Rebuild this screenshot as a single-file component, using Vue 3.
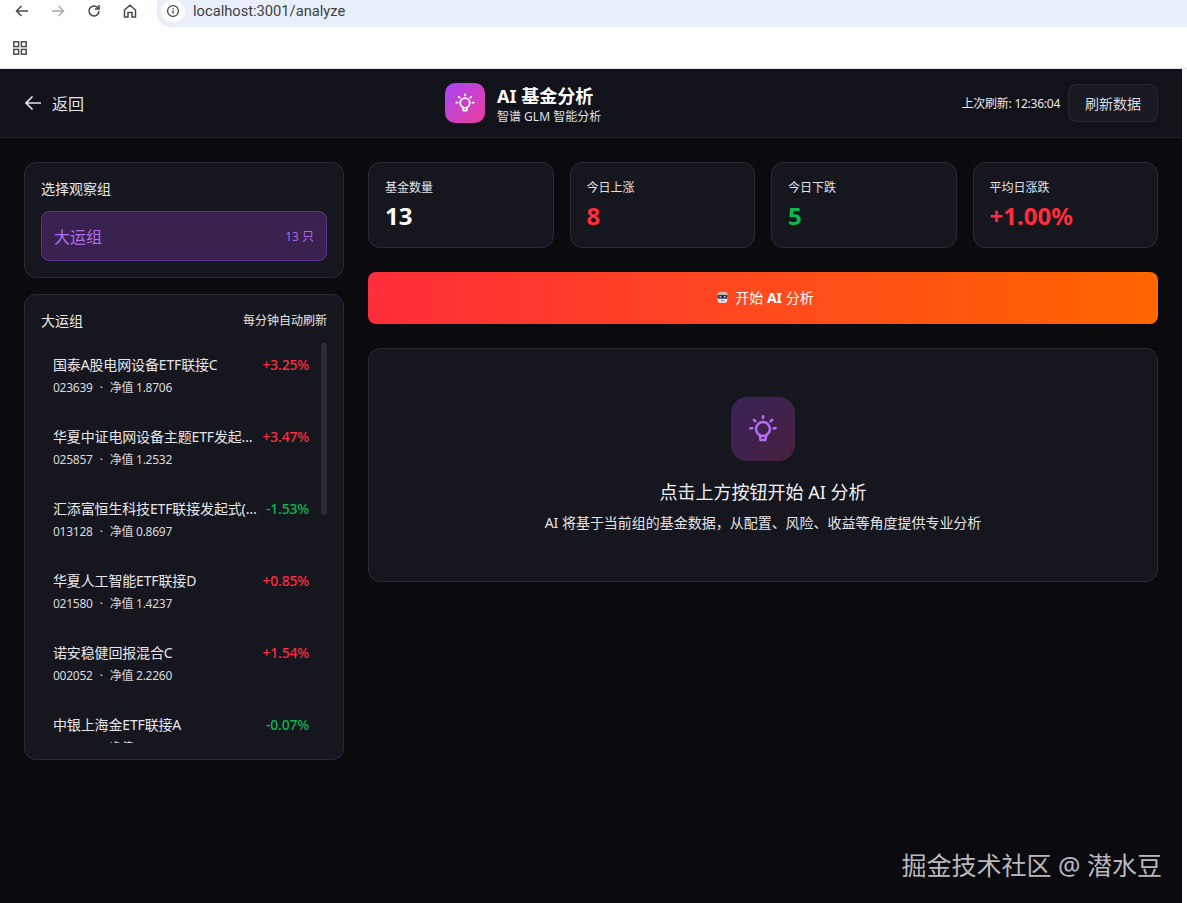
<script setup>
const stats = [
  { label: '基金数量', value: '13', tone: 'white' },
  { label: '今日上涨', value: '8', tone: 'up' },
  { label: '今日下跌', value: '5', tone: 'down' },
  { label: '平均日涨跌', value: '+1.00%', tone: 'up' },
]
const funds = [
  { name: '国泰A股电网设备ETF联接C', code: '023639', nav: '1.8706', pct: '+3.25%', tone: 'up' },
  { name: '华夏中证电网设备主题ETF发起式联接C', code: '025857', nav: '1.2532', pct: '+3.47%', tone: 'up' },
  { name: '汇添富恒生科技ETF联接发起式(QDII)C', code: '013128', nav: '0.8697', pct: '-1.53%', tone: 'down' },
  { name: '华夏人工智能ETF联接D', code: '021580', nav: '1.4237', pct: '+0.85%', tone: 'up' },
  { name: '诺安稳健回报混合C', code: '002052', nav: '2.2260', pct: '+1.54%', tone: 'up' },
  { name: '中银上海金ETF联接A', code: '000000', nav: '1.0000', pct: '-0.07%', tone: 'down' },
]
</script>

<template>
  <div class="page">
    <div class="toolbar">
      <svg class="tb-icon" viewBox="0 0 16 16"><path d="M14 8H2.500M7.500 3 2.500 8l5 5" /></svg>
      <svg class="tb-icon dim" viewBox="0 0 16 16"><path d="M2 8h11.500M8.500 3l5 5-5 5" /></svg>
      <svg class="tb-icon" viewBox="0 0 16 16"><path d="M13 8a5 5 0 1 1-1.500-3.600L13 6M13 2v4H9" /></svg>
      <svg class="tb-icon" viewBox="0 0 16 16"><path d="M2.500 7 8 2.200 13.500 7v7H10V9.500H6V14H2.500Z" /></svg>
      <div class="url">
        <span class="info">
          <svg viewBox="0 0 16 16" width="14" height="14"><circle cx="8" cy="8" r="6.200" /><path d="M8 7.200v4M8 4.500v1.400" /></svg>
        </span>
        <span class="url-text">localhost:3001/analyze</span>
      </div>
    </div>
    <div class="bookmarks">
      <svg viewBox="0 0 14 14" width="14" height="14" class="apps">
        <rect x="0.800" y="0.800" width="4.800" height="4.800" /><rect x="8.400" y="0.800" width="4.800" height="4.800" />
        <rect x="0.800" y="8.400" width="4.800" height="4.800" /><rect x="8.400" y="8.400" width="4.800" height="4.800" />
      </svg>
    </div>

    <div class="app">
      <header class="header">
        <div class="back">
          <svg viewBox="0 0 18 18" width="18" height="18"><path d="M17 9H2M8.500 2.500 2 9l6.500 6.500" /></svg>
          <span>返回</span>
        </div>
        <div class="brand">
          <div class="logo">
            <svg viewBox="0 0 24 24" width="22" height="22"><use href="#bulb" /></svg>
          </div>
          <div class="brand-text">
            <div class="brand-title">AI 基金分析</div>
            <div class="brand-sub">智谱 GLM 智能分析</div>
          </div>
        </div>
        <div class="refresh">
          <span class="refresh-time">上次刷新: 12:36:04</span>
          <button class="refresh-btn">刷新数据</button>
        </div>
      </header>

      <svg width="0" height="0" class="defs">
        <symbol id="bulb" viewBox="0 0 24 24">
          <g fill="none" stroke="currentColor" stroke-width="1.900" stroke-linecap="round" stroke-linejoin="round">
            <path d="M12 2.500v1.200M5.200 5.200l1 1M18.800 5.200l-1 1M2.500 11.500h1.500M20 11.500h1.500" />
            <circle cx="12" cy="12" r="5.200" />
            <path d="M9.600 16.800l.6 3.400h3.600l.6-3.400" />
          </g>
        </symbol>
      </svg>

      <main class="content">
        <aside class="side">
          <section class="card picker">
            <div class="card-title">选择观察组</div>
            <div class="group">
              <span class="group-name">大运组</span>
              <span class="group-count">13 只</span>
            </div>
          </section>
          <section class="card list-card">
            <div class="list-head">
              <span>大运组</span>
              <span class="auto">每分钟自动刷新</span>
            </div>
            <div class="list">
              <div v-for="f in funds" :key="f.name" class="row">
                <div class="row-top">
                  <span class="fund-name">{{ f.name }}</span>
                  <span class="pct" :class="f.tone">{{ f.pct }}</span>
                </div>
                <div class="row-sub">{{ f.code }}<span class="dot">·</span>净值 {{ f.nav }}</div>
              </div>
              <div class="thumb"></div>
            </div>
          </section>
        </aside>

        <div class="main">
          <div class="stats">
            <div v-for="s in stats" :key="s.label" class="card stat">
              <div class="stat-label">{{ s.label }}</div>
              <div class="stat-value" :class="s.tone">{{ s.value }}</div>
            </div>
          </div>
          <button class="start">
            <svg viewBox="0 0 12 12" width="13" height="13">
              <rect x="1.500" y="1" width="9" height="10" rx="3" fill="#e9dfe8" />
              <path d="M2.500 2.800C3.500.9 8.500.9 9.500 2.800Z" fill="#f0a050" />
              <rect x="1.500" y="3.500" width="9" height="3.600" rx="1.200" fill="#2f3350" />
              <circle cx="4" cy="5.300" r=".8" fill="#cfd6f5" />
              <circle cx="8" cy="5.300" r=".8" fill="#cfd6f5" />
              <rect x="5" y="8.500" width="2" height=".9" fill="#6b5a70" />
            </svg>
            <span>开始 <b>AI</b> 分析</span>
          </button>
          <div class="card empty">
            <div class="empty-icon">
              <svg viewBox="0 0 24 24" width="32" height="32"><use href="#bulb" /></svg>
            </div>
            <div class="empty-title">点击上方按钮开始 AI 分析</div>
            <div class="empty-sub">AI 将基于当前组的基金数据，从配置、风险、收益等角度提供专业分析</div>
          </div>
        </div>
      </main>

      <div class="watermark">掘金技术社区 @ 潜水豆</div>
    </div>
  </div>
</template>

<style>
html, body { margin: 0; background: #fff; }
</style>

<style scoped>
* { box-sizing: border-box; }
.page {
  width: 1187px;
  height: 903px;
  overflow: hidden;
  background: #fff;
  font-family: "Noto Sans", "Noto Sans CJK SC", sans-serif;
}
.toolbar {
  height: 27px;
  display: flex;
  align-items: flex-start;
  padding-left: 14px;
  gap: 20px;
}
.tb-icon {
  width: 16px;
  height: 16px;
  margin-top: 3px;
  fill: none;
  stroke: #45484d;
  stroke-width: 1.500;
  flex: none;
}
.tb-icon.dim { stroke: #a9acb1; }
.url {
  margin-left: -1px;
  flex: 1;
  height: 27px;
  background: #e9eff8;
  border-bottom-left-radius: 14px;
  display: flex;
  align-items: center;
  padding: 0 0 5px 4px;
}
.info {
  width: 24px;
  height: 22px;
  border-radius: 50%;
  background: #fff;
  display: flex;
  align-items: center;
  justify-content: center;
}
.info svg { fill: none; stroke: #3c3f44; stroke-width: 1.400; }
.url-text {
  margin-left: 8px;
  font-family: Roboto, sans-serif;
  font-size: 14.700px;
  color: #3c4043;
}
.bookmarks {
  height: 42px;
  display: flex;
  align-items: center;
  padding-left: 13px;
  border-bottom: 1px solid #dcdfe4;
}
.apps { fill: none; stroke: #4a4d52; stroke-width: 1.500; }
.app {
  position: relative;
  width: 1182px;
  height: 834px;
  background: #0a0a0f;
  color: #e9e9ee;
}
.defs { position: absolute; }
.header {
  height: 69px;
  display: flex;
  align-items: center;
  padding: 0 24px;
  background: #11121a;
  border-bottom: 1px solid #24252d;
}
.back {
  display: flex;
  align-items: center;
  gap: 10px;
  font-size: 16px;
  color: #e4e4ea;
  flex: none;
  width: 421px;
}
.back svg { fill: none; stroke: #e4e4ea; stroke-width: 1.700; }
.brand { display: flex; align-items: center; gap: 12px; }
.logo {
  width: 40px;
  height: 40px;
  border-radius: 10px;
  background: linear-gradient(135deg, #a845f7, #ec3c9a);
  display: flex;
  align-items: center;
  justify-content: center;
  color: #fff;
}
.brand-text { padding-top: 3px; }
.brand-title { font-size: 18px; font-weight: 700; line-height: 24px; color: #fff; }
.brand-sub { margin-top: 1px; font-size: 12px; line-height: 16px; color: #e0e0e6; }
.refresh { margin-left: auto; display: flex; align-items: center; gap: 8px; }
.refresh-time { font-size: 12px; color: #eaeaef; letter-spacing: -0.250px; }
.refresh-btn {
  height: 38px;
  width: 90px;
  border-radius: 8px;
  border: 1px solid #26272f;
  background: #191a23;
  color: #d8d8de;
  font: inherit;
  font-size: 14px;
  padding: 0;
}
.content {
  display: flex;
  gap: 24px;
  padding: 24px 24px 0;
}
.card {
  background: #15161e;
  border: 1px solid #2a2b34;
  border-radius: 12px;
}
.side { width: 320px; flex: none; display: flex; flex-direction: column; gap: 16px; }
.picker { padding: 16px; }
.card-title { font-size: 14px; line-height: 20px; color: #e6e6ea; margin-bottom: 12px; }
.group {
  height: 50px;
  border: 1px solid #5b3488;
  border-radius: 8px;
  background: #39224f;
  display: flex;
  align-items: center;
  justify-content: space-between;
  padding: 0 12px;
}
.group-name { font-size: 16px; color: #b26eea; }
.group-count { font-size: 12px; color: #a866e6; }
.list-card { padding: 16px; height: 466px; }
.list-head {
  display: flex;
  justify-content: space-between;
  align-items: center;
  font-size: 14px;
  line-height: 20px;
  color: #e6e6ea;
  margin-bottom: 12px;
}
.auto { font-size: 12px; }
.list {
  position: relative;
  height: 400px;
  overflow: hidden;
  display: flex;
  flex-direction: column;
  gap: 4px;
}
.row { flex: none; height: 68px; width: 280px; padding: 12px; }
.row-top { display: flex; align-items: center; justify-content: space-between; gap: 4px; line-height: 20px; }
.fund-name {
  flex: 1;
  min-width: 0;
  font-size: 14px;
  letter-spacing: -0.150px;
  color: #e6e6ea;
  white-space: nowrap;
  overflow: hidden;
  text-overflow: ellipsis;
}
.pct { flex: none; font-size: 14px; font-weight: 500; letter-spacing: -0.200px; }
.up { color: #ff2d3d; }
.down { color: #07b84f; }
.white { color: #fff; }
.row-sub { margin-top: 3px; font-size: 12px; line-height: 20px; color: #dadade; letter-spacing: -0.250px; }
.dot { margin: 0 7px; }
.thumb {
  position: absolute;
  right: 0;
  top: 0;
  width: 6px;
  height: 172px;
  border-radius: 3px;
  background: #2b2c38;
}
.main { width: 790px; flex: none; display: flex; flex-direction: column; gap: 24px; }
.stats { display: grid; grid-template-columns: repeat(4, 1fr); gap: 16px; }
.stat { padding: 17px 16px 0; height: 86px; }
.stat-label { font-size: 12px; line-height: 16px; color: #e2e2e7; margin-bottom: 4px; }
.stat-value { font-size: 24px; line-height: 32px; font-weight: 700; }
.start {
  height: 52px;
  border: 0;
  border-radius: 8px;
  background: linear-gradient(90deg, #ff2d3a, #ff6600);
  color: #fff;
  font: inherit;
  font-size: 14px;
  display: flex;
  align-items: center;
  justify-content: center;
  gap: 6px;
  padding: 0 0 2px 4px;
}
.start b { font-weight: 700; }
.empty {
  height: 234px;
  padding-top: 48px;
  display: flex;
  flex-direction: column;
  align-items: center;
}
.empty-icon {
  width: 64px;
  height: 64px;
  border-radius: 16px;
  background: linear-gradient(135deg, #3a2258, #46203f);
  display: flex;
  align-items: center;
  justify-content: center;
  color: #b36ef2;
  margin-bottom: 18px;
}
.empty-title { font-size: 18px; line-height: 26px; color: #f2f2f5; margin-bottom: 8px; }
.empty-sub { font-size: 14px; line-height: 20px; color: #e4e4e8; letter-spacing: -0.020px; }
.watermark {
  position: absolute;
  right: 20px;
  bottom: 21px;
  font-size: 25px;
  line-height: 34px;
  color: #b9b9bd;
  white-space: nowrap;
}
</style>
